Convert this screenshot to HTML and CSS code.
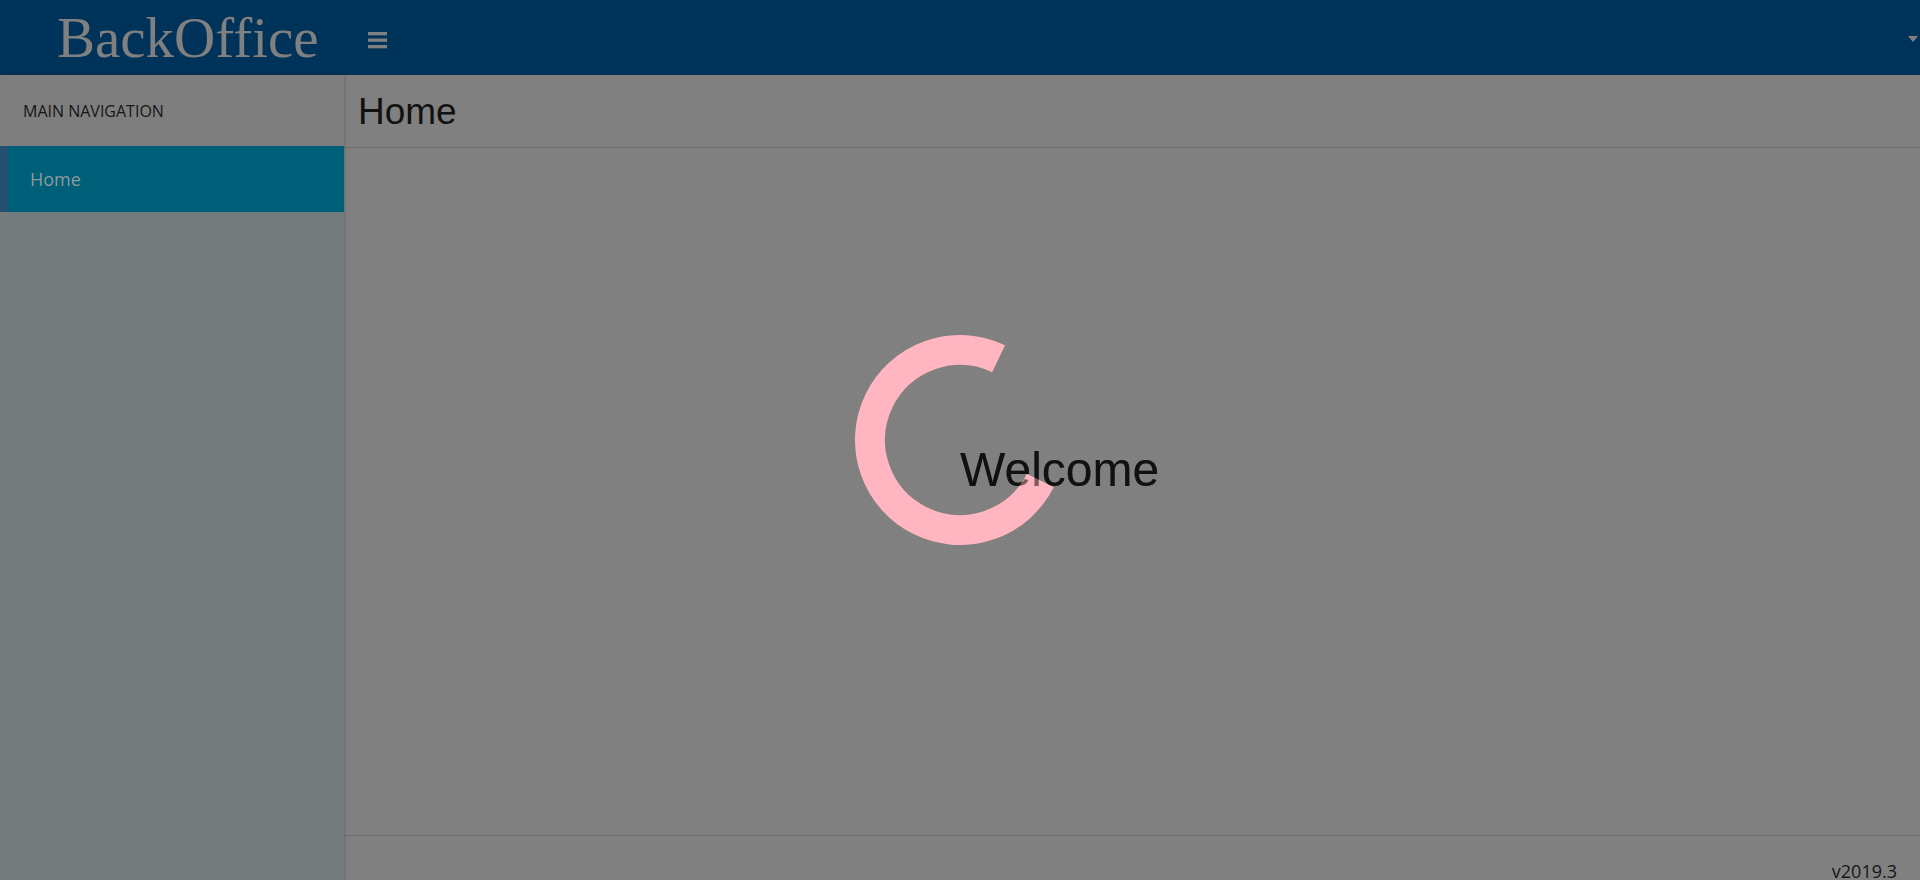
FILE: index.html
```html
<!DOCTYPE html>
<html lang="en">
<head>
<meta charset="utf-8">
<title>BackOffice</title>
<link rel="stylesheet" href="styles.css">
</head>
<body>
<header class="topbar">
  <div class="logo">BackOffice</div>
  <button class="toggle" type="button" aria-label="Toggle navigation">
    <svg width="19" height="17" viewBox="0 0 19 17"><rect x="0" y="0" width="19" height="3.3"/><rect x="0" y="6.5" width="19" height="3.3"/><rect x="0" y="13" width="19" height="3.3"/></svg>
  </button>
  <div class="spacer"></div>
  <span class="caret"></span>
</header>
<div class="layout">
  <aside class="sidebar">
    <div class="sidebar-header">MAIN NAVIGATION</div>
    <ul class="menu">
      <li class="menu-item active">Home</li>
    </ul>
  </aside>
  <main class="main">
    <div class="page-header"><h1 class="page-title">Home</h1></div>
    <div class="page-body"></div>
    <footer class="footer">v2019.3</footer>
  </main>
</div>
<div class="loader">
  <svg class="spinner" width="210" height="210" viewBox="0 0 210 210"><path d="M185.34 145.58 A90 90 0 1 1 143.6 23.7" fill="none" stroke="#ffb6c1" stroke-width="30"/></svg>
  <div class="welcome" data-text="Welcome">Welcome</div>
</div>
</body>
</html>
```
FILE: styles.css
```css
html, body {
  margin: 0;
  padding: 0;
  height: 100%;
  overflow: hidden;
}
body {
  background: #808080;
  font-family: "Open Sans", "Liberation Sans", sans-serif;
}
.topbar {
  height: 75px;
  background: #00335a;
  display: flex;
  align-items: flex-start;
}
.logo {
  font-family: "Liberation Serif", serif;
  font-size: 57px;
  line-height: 75px;
  color: #808080;
  padding-left: 57px;
}
.toggle {
  margin: 32px 0 0 49px;
  padding: 0;
  border: 0;
  background: none;
  width: 19px;
  height: 17px;
  display: block;
}
.toggle svg {
  display: block;
  fill: #808080;
}
.spacer { flex: 1; }
.caret {
  margin: 36px 2px 0 0;
  width: 0;
  height: 0;
  border-left: 5px solid transparent;
  border-right: 5px solid transparent;
  border-top: 6px solid #808080;
}
.layout {
  display: flex;
  height: calc(100% - 75px);
}
.sidebar {
  width: 344px;
  flex-shrink: 0;
  background: #737b7d;
  display: flex;
  flex-direction: column;
  box-shadow: 1px 0 3px rgba(0, 0, 0, 0.12);
  position: relative;
  z-index: 1;
}
.sidebar-header {
  height: 71px;
  background: #7e7e7e;
  font-size: 16px;
  line-height: 72px;
  color: #161616;
  padding-left: 23px;
}
.menu {
  list-style: none;
  margin: 0;
  padding: 0;
}
.menu-item {
  height: 66px;
  line-height: 66px;
  font-size: 18px;
  color: #8f999b;
  padding-left: 22px;
}
.menu-item.active {
  background: #005f78;
  border-left: 8px solid #244f70;
}
.main {
  flex: 1;
  display: flex;
  flex-direction: column;
  border-left: 1px solid #7a7a7a;
  background: #808080;
}
.page-header {
  height: 72px;
  border-bottom: 1px solid #6c6c6c;
  display: flex;
  align-items: center;
  padding: 2px 0 0 13px;
  box-sizing: border-box;
  height: 73px;
}
.page-title {
  margin: 0;
  font-family: "Liberation Sans", Arial, sans-serif;
  font-weight: normal;
  font-size: 37px;
  color: #111111;
}
.page-body {
  flex: 1;
}
.footer {
  flex-shrink: 0;
  height: 45px;
  box-sizing: border-box;
  border-top: 1px solid #6a6a6a;
  padding: 23px 23px 0 0;
  text-align: right;
  font-size: 18px;
  color: #161616;
  line-height: normal;
}
.loader {
  position: fixed;
  left: 0;
  top: 0;
  right: 0;
  bottom: 0;
  z-index: 10;
  pointer-events: none;
}
.spinner {
  position: absolute;
  left: 50%;
  top: 50%;
  margin: -105px 0 0 -105px;
  z-index: 1;
  display: block;
}
.welcome {
  position: absolute;
  left: 50%;
  top: 50%;
  margin-top: 2px;
  font-family: "Liberation Sans", Arial, sans-serif;
  font-size: 48px;
  color: #222222;
  white-space: nowrap;
}
.welcome::after {
  content: attr(data-text);
  position: absolute;
  left: 0;
  top: 0;
  z-index: 2;
  color: rgba(0, 0, 0, 0.5);
}
```
